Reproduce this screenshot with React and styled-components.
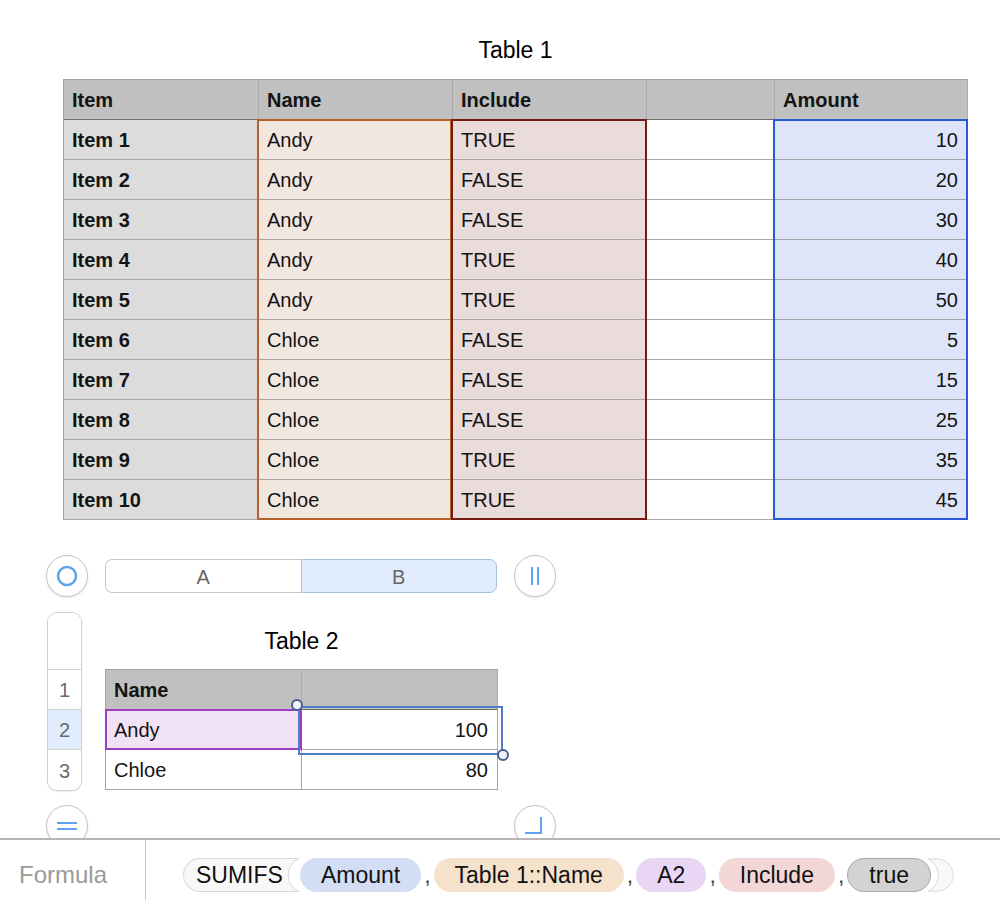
import React from 'react';
import styled, { createGlobalStyle } from 'styled-components';

const Global = createGlobalStyle`
  html, body { margin: 0; padding: 0; background: #fff; }
  body { font-family: "Liberation Sans", Arial, Helvetica, sans-serif; color: #111; }
`;

const Page = styled.div`
  width: 1000px;
  height: 900px;
  overflow: hidden;
  display: flex;
  flex-direction: column;
  background: #fff;
`;

const Canvas = styled.div`
  flex: none;
  height: 838px;
  overflow: hidden;
  display: flex;
  flex-direction: column;
`;

const TableBlock = styled.div`
  display: flex;
  flex-direction: column;
  margin-left: ${p => p.$left || 0}px;
  width: ${p => p.$width}px;
`;

const Title = styled.div`
  font-size: 23px;
  line-height: 28px;
  height: 28px;
  text-align: center;
  color: #000;
  padding-top: ${p => p.$top}px;
  margin-bottom: ${p => p.$bottom}px;
`;

const Grid = styled.div`
  display: grid;
  grid-template-columns: ${p => p.$cols};
  grid-auto-rows: 40px;
  border-top: 1px solid #a2a2a2;
  border-left: 1px solid #a2a2a2;
  width: max-content;
`;

const Cell = styled.div`
  grid-row: ${p => p.$row};
  grid-column: ${p => p.$col};
  box-sizing: border-box;
  border-right: 1px solid ${p => (p.$head ? '#a9a9a9' : '#a6a6a6')};
  border-bottom: 1px solid ${p => (p.$head ? '#6f6f6f' : '#a6a6a6')};
  background: ${p => p.$bg || '#fff'};
  font-size: 20px;
  font-weight: ${p => (p.$bold ? 700 : 400)};
  color: #141414;
  display: flex;
  align-items: center;
  justify-content: ${p => (p.$right ? 'flex-end' : 'flex-start')};
  padding: 2px 9px 0 8px;
  white-space: nowrap;
`;

const Frame = styled.div`
  grid-column: ${p => p.$col};
  grid-row: ${p => p.$rows};
  margin: ${p => p.$m};
  border: ${p => p.$w || 2}px solid ${p => p.$color};
  pointer-events: none;
  position: relative;
  z-index: 1;
`;

const Handle = styled.span`
  position: absolute;
  width: 12px;
  height: 12px;
  box-sizing: border-box;
  border-radius: 50%;
  border: 2px solid #4b5d8f;
  background: #f2f4fb;
  ${p => (p.$end ? 'right: -8px; bottom: -8px;' : 'left: -9px; top: -9px;')}
`;

const ControlRow = styled.div`
  display: flex;
  align-items: center;
  gap: 17px;
  margin: 35px 0 0 46px;
`;

const RoundButton = styled.div`
  flex: none;
  width: 42px;
  height: 42px;
  box-sizing: border-box;
  border-radius: 50%;
  border: 1px solid #c6c6c6;
  background: #fff;
  box-shadow: 0 1px 2px rgba(0, 0, 0, 0.12);
  display: flex;
  align-items: center;
  justify-content: center;
`;

const Segmented = styled.div`
  display: flex;
  width: 392px;
  height: 34px;
`;

const Segment = styled.div`
  flex: 1;
  box-sizing: border-box;
  display: flex;
  align-items: center;
  justify-content: center;
  padding-top: 2px;
  font-size: 20px;
  color: #666;
  background: ${p => (p.$active ? '#e1edfc' : '#fff')};
  border: 1px solid ${p => (p.$active ? '#a8c0de' : '#c8c8c8')};
  ${p => (p.$active ? 'border-radius: 0 7px 7px 0;' : 'border-right: none; border-radius: 7px 0 0 7px;')}
`;

const Lower = styled.div`
  display: flex;
  align-items: flex-start;
  gap: 23px;
  margin: 15px 0 0 47px;
`;

const RowHeads = styled.div`
  flex: none;
  width: 35px;
  box-sizing: border-box;
  border: 1px solid #cfcfcf;
  border-radius: 10px;
  overflow: hidden;
  display: flex;
  flex-direction: column;
  background: #fff;
  box-shadow: 0 1px 1px rgba(0, 0, 0, 0.08);
`;

const RowHead = styled.div`
  height: ${p => p.$h}px;
  box-sizing: border-box;
  border-bottom: ${p => (p.$last ? 'none' : '1px solid #d3d3d3')};
  background: ${p => (p.$active ? '#e1edfc' : '#fff')};
  display: flex;
  align-items: center;
  justify-content: center;
  padding-top: 2px;
  font-size: 20px;
  color: #6a6a6a;
`;

const BottomRow = styled.div`
  display: flex;
  justify-content: space-between;
  width: 510px;
  margin: 14px 0 0 46px;
`;

const FormulaBar = styled.div`
  flex: none;
  height: 62px;
  box-sizing: border-box;
  border-top: 2px solid #b5b5b5;
  display: flex;
  background: #fff;
`;

const FormulaLabel = styled.div`
  width: 146px;
  box-sizing: border-box;
  border-right: 1px solid #c9c9c9;
  padding: 18px 0 0 19px;
  font-size: 24px;
  line-height: 34px;
  color: #9a9a9a;
`;

const Tokens = styled.div`
  display: flex;
  align-items: center;
  height: 34px;
  padding: 18px 0 0 37px;
`;

const FnPill = styled.span`
  height: 34px;
  box-sizing: border-box;
  display: inline-flex;
  align-items: center;
  padding: 0 3px 0 12px;
  border: 1px solid #d8d8d8;
  border-right: none;
  border-radius: 17px 0 0 17px;
  background: #f8f8f8;
  font-size: 23px;
  color: #111;
`;

const Pill = styled.span`
  height: 34px;
  box-sizing: border-box;
  display: inline-flex;
  align-items: center;
  padding: 0 21px;
  border-radius: 17px;
  background: ${p => p.$bg};
  border: ${p => (p.$border ? `1.5px solid ${p.$border}` : 'none')};
  font-size: 23px;
  color: #111;
  white-space: nowrap;
`;

const Comma = styled.span`
  font-size: 23px;
  color: #444;
  margin: 0 3px;
  line-height: 34px;
  height: 34px;
  display: inline-flex;
  align-items: center;
`;

const ParenSvg = styled.svg`
  flex: none;
  margin-left: ${p => p.$ml || 0}px;
  display: block;
`;

const C1 = '195px 194px 194px 128px 193px';
const names = ['Andy', 'Andy', 'Andy', 'Andy', 'Andy', 'Chloe', 'Chloe', 'Chloe', 'Chloe', 'Chloe'];
const incl = ['TRUE', 'FALSE', 'FALSE', 'TRUE', 'TRUE', 'FALSE', 'FALSE', 'FALSE', 'TRUE', 'TRUE'];
const amounts = [10, 20, 30, 40, 50, 5, 15, 25, 35, 45];

const HEAD = '#bfc0bf';

function Table1() {
  const headers = ['Item', 'Name', 'Include', '', 'Amount'];
  return (
    <TableBlock $left={63} $width={905}>
      <Title $top={36} $bottom={15}>Table 1</Title>
      <Grid $cols={C1}>
        {headers.map((h, i) => (
          <Cell key={'h' + i} $row={1} $col={i + 1} $head $bold $bg={HEAD}>{h}</Cell>
        ))}
        {names.map((n, r) => (
          <React.Fragment key={r}>
            <Cell $row={r + 2} $col={1} $bold $bg="#dcdcdc">Item {r + 1}</Cell>
            <Cell $row={r + 2} $col={2} $bg="#f2e7df">{n}</Cell>
            <Cell $row={r + 2} $col={3} $bg="#ebdcdc">{incl[r]}</Cell>
            <Cell $row={r + 2} $col={4} />
            <Cell $row={r + 2} $col={5} $bg="#dfe5f8" $right>{amounts[r]}</Cell>
          </React.Fragment>
        ))}
        <Frame $col={2} $rows="2 / 12" $m="-1px 1px 0 -2px" $color="#b5612b" />
        <Frame $col={3} $rows="2 / 12" $m="-1px 0 0 -2px" $color="#741a13" />
        <Frame $col={5} $rows="2 / 12" $m="-1px 0 0 -2px" $color="#2b5ad6" />
      </Grid>
    </TableBlock>
  );
}

function Table2() {
  return (
    <TableBlock $width={393}>
      <Title $top={15} $bottom={14}>Table 2</Title>
      <Grid $cols="196px 196px">
        <Cell $row={1} $col={1} $head $bold $bg={HEAD}>Name</Cell>
        <Cell $row={1} $col={2} $head $bg={HEAD} />
        <Cell $row={2} $col={1} $bg="#f1e2f6">Andy</Cell>
        <Cell $row={2} $col={2} $right>100</Cell>
        <Cell $row={3} $col={1}>Chloe</Cell>
        <Cell $row={3} $col={2} $right>80</Cell>
        <Frame $col={1} $rows="2 / 3" $m="-1px 0 0 -1px" $color="#9c3fc4" />
        <Frame $col={2} $rows="2 / 3" $m="-4px -5px -5px -4px" $color="#4b7dcb">
          <Handle />
          <Handle $end />
        </Frame>
      </Grid>
    </TableBlock>
  );
}

const blue = '#5ea2f2';

export default function App() {
  return (
    <Page>
      <Global />
      <Canvas>
        <Table1 />
        <ControlRow>
          <RoundButton>
            <svg width="24" height="24" viewBox="0 0 24 24">
              <circle cx="12" cy="12" r="9" fill="none" stroke={blue} strokeWidth="2.5" />
            </svg>
          </RoundButton>
          <Segmented>
            <Segment>A</Segment>
            <Segment $active>B</Segment>
          </Segmented>
          <RoundButton>
            <svg width="12" height="20" viewBox="0 0 12 20">
              <line x1="3" y1="1" x2="3" y2="19" stroke={blue} strokeWidth="2" />
              <line x1="9" y1="1" x2="9" y2="19" stroke={blue} strokeWidth="2" />
            </svg>
          </RoundButton>
        </ControlRow>
        <Lower>
          <RowHeads>
            <RowHead $h={57} />
            <RowHead $h={40}>1</RowHead>
            <RowHead $h={40} $active>2</RowHead>
            <RowHead $h={40} $last>3</RowHead>
          </RowHeads>
          <Table2 />
        </Lower>
        <BottomRow>
          <RoundButton>
            <svg width="22" height="10" viewBox="0 0 22 10">
              <line x1="1" y1="2" x2="21" y2="2" stroke={blue} strokeWidth="2" />
              <line x1="1" y1="8" x2="21" y2="8" stroke={blue} strokeWidth="2" />
            </svg>
          </RoundButton>
          <RoundButton>
            <svg width="42" height="42" viewBox="0 0 42 42" style={{ margin: -1 }}>
              <polyline points="11,28 27,28 27,12" fill="none" stroke={blue} strokeWidth="2" />
            </svg>
          </RoundButton>
        </BottomRow>
      </Canvas>
      <FormulaBar>
        <FormulaLabel>Formula</FormulaLabel>
        <Tokens>
          <FnPill>SUMIFS</FnPill>
          <ParenSvg width="14" height="34" viewBox="0 0 14 34">
            <path d="M0 0.5 L13 0.5 A18 18 0 0 0 13 33.5 L0 33.5 Z" fill="#f8f8f8" />
            <path d="M0 0.5 L13 0.5 A18 18 0 0 0 13 33.5 L0 33.5" fill="none" stroke="#d8d8d8" strokeWidth="1" />
          </ParenSvg>
          <Pill $bg="#d3ddf3">Amount</Pill>
          <Comma>,</Comma>
          <Pill $bg="#f5e2cc">Table 1::Name</Pill>
          <Comma>,</Comma>
          <Pill $bg="#e9d6f4">A2</Pill>
          <Comma>,</Comma>
          <Pill $bg="#f3d6d6">Include</Pill>
          <Comma>,</Comma>
          <Pill $bg="#d3d3d3" $border="#a9a9a9">true</Pill>
          <ParenSvg $ml={-5} width="28" height="34" viewBox="0 0 28 34">
            <path d="M2 0.75 A18 18 0 0 1 2 33.25 L11 33.25 A16.25 16.25 0 0 0 11 0.75 Z" fill="#f8f8f8" stroke="#dadada" strokeWidth="1" />
          </ParenSvg>
        </Tokens>
      </FormulaBar>
    </Page>
  );
}
